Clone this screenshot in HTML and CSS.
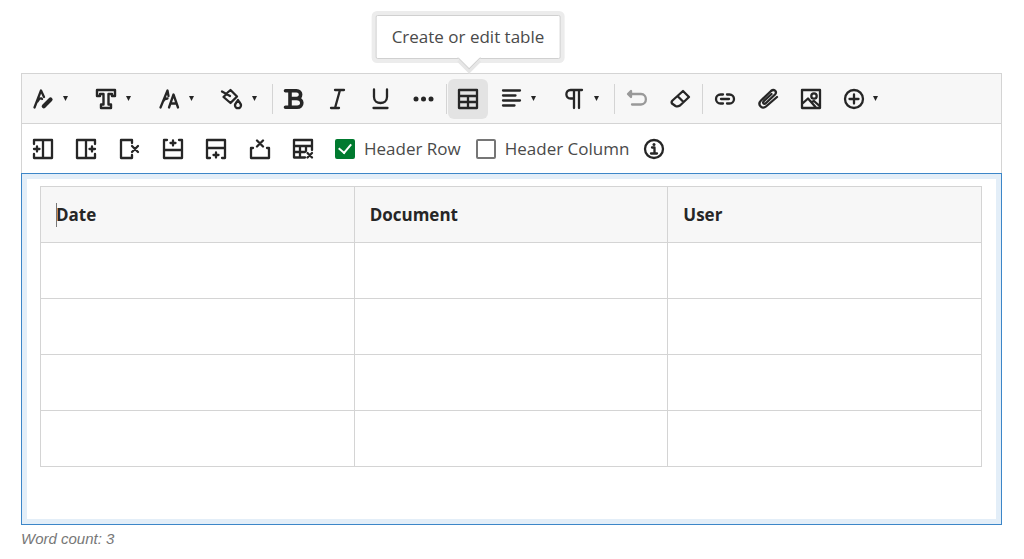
FILE: index.html
```html
<!DOCTYPE html>
<html lang="en">
    <head>
        <meta charset="UTF-8" />
        <meta name="viewport" content="width=device-width, initial-scale=1.0" />
        <title>Text editor</title>
        <link rel="stylesheet" href="styles.css">
    </head>
    <body>
        <main class="editor">
            <div class="toolbar" role="toolbar" aria-label="Formatting">
                <div class="group">
                    <button class="tool drop" aria-label="Text color">
                        <svg viewBox="0 0 20 20"><path d="M1.5 18.5L8 1.5L11 8M4.5 12.5C6 9.500 8.500 8.500 9 10" /><path d="M10.800 17.200L12.500 15.500M13 15L17.500 10.500" stroke-width="4.200" /></svg>
                    </button>
                    <button class="tool drop" aria-label="Font">
                        <svg viewBox="0 0 20 20"><path d="M1 1H19V7H16V5H12.500V15.500H15V19H5V15.500H7.500V5H4V7H1Z" stroke-width="2.400" /></svg>
                    </button>
                    <button class="tool drop" aria-label="Font size">
                        <svg viewBox="0 0 20 20"><path d="M1.500 18.500L8.500 1.500L9.500 7M4 12.500C5 10 7 9.500 8.500 9.500M10 18.500L14.500 5.500L19 18.500M11.500 14.500H17.500" /></svg>
                    </button>
                    <button class="tool drop" aria-label="Highlight color">
                        <svg viewBox="0 0 20 20"><path d="M0 2.500L8 7M4.500 4.500L8.500 1L15 7.500L8.500 14L1.500 8L4.500 5" /><path d="M16 11C14.500 13.500 13 14.800 13 16.200A3 3 0 0 0 19 16.200C19 14.800 17.500 13.500 16 11Z" /></svg>
                    </button>
                </div>
                <div class="group">
                    <button class="tool" aria-label="Bold">
                        <svg viewBox="0 0 20 20"><path d="M1.500 1.700H12.500C18 1.700 18 9.500 12.500 9.500H6M12.500 9.500C19.500 9.500 19.500 18.300 13 18.300H1.500M6 2V18" stroke-width="3.600" /></svg>
                    </button>
                    <button class="tool" aria-label="Italic">
                        <svg viewBox="0 0 20 20"><path d="M6 1H15M2 19H10M11 1L6 19" transform="translate(2)" /></svg>
                    </button>
                    <button class="tool" aria-label="Underline">
                        <svg viewBox="0 0 20 20"><path d="M4 .5V8C4 16 17 16 17 8V.5M3.500 19H17.500" /></svg>
                    </button>
                    <button class="tool" aria-label="More formatting">
                        <svg viewBox="0 0 20 20"><g fill="currentColor" stroke="none"><circle cx="3" cy="10" r="2.500" /><circle cx="10.500" cy="10" r="2.500" /><circle cx="18" cy="10" r="2.500" /></g></svg>
                    </button>
                </div>
                <div class="group">
                    <button class="tool active" aria-describedby="tip" aria-label="Table">
                        <svg viewBox="0 0 20 20"><path d="M1 1H19V19H1ZM1 7H19M1 13H19M10 7V19" /></svg>
                        <span class="tooltip" id="tip" role="tooltip">Create or edit table</span>
                    </button>
                    <button class="tool drop" aria-label="Alignment">
                        <svg viewBox="0 0 20 20"><path d="M2 1.500H19M2 6.500H14.500M2 11.500H19M2 16.500H13.500" /></svg>
                    </button>
                    <button class="tool drop" aria-label="Text direction">
                        <svg viewBox="0 0 20 20"><path d="M18 1H6.500C1 1 1 9.500 6.500 9.500H10M10 1V19M15 1V19" /></svg>
                    </button>
                </div>
                <div class="group">
                    <button class="tool" aria-label="Undo" disabled>
                        <svg viewBox="0 0 20 20"><path d="M4 5H15C21.500 5 21.500 15.500 15 15.500H6" /><path d="M2 5L5 2V8Z" fill="currentColor" /></svg>
                    </button>
                    <button class="tool" aria-label="Clear formatting">
                        <svg viewBox="0 0 20 20"><path d="M14 2L20 8L11 16.500Q8.500 18 6.500 17L3 14.500Q2 13 3.500 11.500ZM8.500 7L14.500 13" /></svg>
                    </button>
                </div>
                <div class="group">
                    <button class="tool" aria-label="Link">
                        <svg viewBox="0 0 20 20"><path d="M9 5.500H6.500A4.500 4.500 0 0 0 6.500 14.500H9M13 5.500H15.500A4.500 4.500 0 0 1 15.500 14.500H13M7 10H15" /></svg>
                    </button>
                    <button class="tool" aria-label="Attach file">
                        <svg viewBox="0 0 20 20"><path d="M14.500 5L7 12C5 14 7 16 9 14L18 5.500C20.500 2.500 17-.5 14 2L4 11.500C0 15.500 5 21 9 17.500L20 8" /></svg>
                    </button>
                    <button class="tool" aria-label="Image">
                        <svg viewBox="0 0 20 20"><path d="M2 1H20V19H2ZM2.500 14.500L8 9.500L15.500 18M11.500 13L14 12L19 16.500" /><circle cx="14" cy="7" r="2.700" /></svg>
                    </button>
                    <button class="tool drop" aria-label="Insert content">
                        <svg viewBox="0 0 20 20"><circle cx="11" cy="10" r="9" /><path d="M11 5.500V14.500M6.500 10H15.500" /></svg>
                    </button>
                </div>
            </div>
            <div class="toolbar table-bar" role="toolbar" aria-label="Table">
                <div class="table-tools">
                    <button class="tool" aria-label="Insert column left">
                        <svg viewBox="0 0 20 20"><path d="M1 5V1H19V19H1V15M10 1V19M1 10H6.500M4 7.500V12.500" /></svg>
                    </button>
                    <button class="tool" aria-label="Insert column right">
                        <svg viewBox="0 0 20 20"><path d="M19 5V1H1V19H19V15M10 1V19M13.500 10H19M16 7.500V12.500" /></svg>
                    </button>
                    <button class="tool" aria-label="Delete column">
                        <svg viewBox="0 0 20 20"><path d="M12 4V1H1V19H12V16M12 7L18 13M18 7L12 13" /></svg>
                    </button>
                    <button class="tool" aria-label="Insert row above">
                        <svg viewBox="0 0 20 20"><path d="M4 1H1V19H19V1H16M1 11H19M7.500 4H12.500M10 1.500V6.500" /></svg>
                    </button>
                    <button class="tool" aria-label="Insert row below">
                        <svg viewBox="0 0 20 20"><path d="M4 19H1V1H19V19H16M1 9H19M7.500 16H12.500M10 13.500V18.500" /></svg>
                    </button>
                    <button class="tool" aria-label="Delete row">
                        <svg viewBox="0 0 20 20"><path d="M3 9H1V19H19V9H17M7 1.500L13 7.500M13 1.500L7 7.500" /></svg>
                    </button>
                    <button class="tool" aria-label="Delete table">
                        <svg viewBox="0 0 20 20"><path d="M12 18.500H1V1H19V11M1 7H19M1 13H12M7 7V18.500M13 7V12M14.500 14L19 18.500M19 14L14.500 18.500" /></svg>
                    </button>
                </div>
                <label class="check"><input type="checkbox" checked />Header Row</label>
                <label class="check"><input type="checkbox" />Header Column</label>
                <button class="tool info" aria-label="Table help">
                    <svg viewBox="0 0 20 20"><circle cx="10" cy="10" r="9" /><path d="M8 8.500H10.500V14M7 14.500H13" /><circle cx="10" cy="5.500" r="1.500" fill="currentColor" stroke="none" /></svg>
                </button>
            </div>
            <div class="content">
                <table>
                    <thead>
                        <tr><th><span class="cursor"></span>Date</th><th>Document</th><th>User</th></tr>
                    </thead>
                    <tbody>
                        <tr><td></td><td></td><td></td></tr>
                        <tr><td></td><td></td><td></td></tr>
                        <tr><td></td><td></td><td></td></tr>
                        <tr><td></td><td></td><td></td></tr>
                    </tbody>
                </table>
            </div>
            <p class="word-count">Word count: 3</p>
        </main>
    </body>
</html>
```
FILE: styles.css
```css
* {
    margin: 0;
    padding: 0;
    box-sizing: border-box;
}

body {
    padding: 73px 22px 0 21px;
    background: #fff;
    color: #262626;
    font: 17px/24px "Open Sans", "Noto Sans", sans-serif;
}

.toolbar {
    display: flex;
    align-items: center;
    height: 50px;
    border: 1px solid #d4d4d4;
    border-bottom: 0;
    background: #f7f7f7;
}

.group {
    display: flex;
    align-items: center;
    height: 30px;
    padding-left: 1px;
}

.group + .group {
    border-left: 1px solid #d4d4d4;
}

.group .tool {
    margin-right: 3px;
}

.group .drop:last-child {
    margin-right: 0;
}

.tool {
    position: relative;
    display: flex;
    align-items: center;
    gap: 10px;
    width: 40px;
    height: 40px;
    padding-left: 10px;
    border: 0;
    border-radius: 6px;
    background: none;
    color: #262626;
    font: inherit;
}

.tool svg {
    flex: none;
    width: 20px;
    height: 20px;
    overflow: visible;
    fill: none;
    stroke: currentColor;
    stroke-width: 2.3;
    stroke-linecap: round;
    stroke-linejoin: round;
}

.tool:disabled {
    color: #999;
}

.tool.active {
    background: #e3e3e3;
}

.drop {
    width: 60px;
}

.drop::after {
    content: "";
    width: 5px;
    height: 5px;
    background: #262626;
    clip-path: polygon(0 0, 100% 0, 50% 100%);
}

.tooltip {
    position: absolute;
    bottom: 60px;
    left: 50%;
    transform: translateX(-50%);
    padding: 9px 15px;
    border: 1px solid #d0d0d0;
    border-radius: 2px;
    background: #fff;
    box-shadow: 0 0 0 4px #ececec;
    color: #4a4a4a;
    white-space: nowrap;
}

.tooltip::after {
    content: "";
    position: absolute;
    left: 50%;
    bottom: -8px;
    width: 16px;
    height: 16px;
    margin-left: -7px;
    border: solid #d0d0d0;
    border-width: 0 1px 1px 0;
    background: #fff;
    box-shadow: 3px 3px 0 #e6e6e6;
    transform: rotate(45deg);
    clip-path: polygon(100% 0, 130% 0, 130% 130%, 0 130%, 0 100%);
}

.table-bar {
    padding-left: 1px;
    background: #fff;
}

.table-tools {
    display: flex;
    justify-content: space-between;
    width: 300px;
    margin-right: 12px;
}

.check {
    display: flex;
    align-items: center;
    gap: 9px;
    margin-right: 15px;
    color: #4a4a4a;
}

.check input {
    appearance: none;
    display: grid;
    place-items: center;
    width: 20px;
    height: 20px;
    border: 2px solid #767676;
    border-radius: 2px;
    background: #fff;
}

.check input:checked {
    border-color: #007a2f;
    background: #007a2f;
}

.check input:checked::after {
    content: "";
    width: 6px;
    height: 10px;
    margin-bottom: 3px;
    border: solid #fff;
    border-width: 0 2px 2px 0;
    transform: rotate(40deg);
}

.info {
    margin-left: -10px;
}

.content {
    min-height: 352px;
    padding: 12px 19px 12px 18px;
    border: 1px solid #3c86c8;
    box-shadow: inset 0 0 0 5px #e3eef8;
}

table {
    width: 100%;
    border-collapse: collapse;
    table-layout: fixed;
}

th,
td {
    height: 56px;
    padding: 0 15px;
    border: 1px solid #d4d4d4;
    text-align: left;
}

th {
    background: #f7f7f7;
}

.cursor {
    position: absolute;
    width: 1px;
    height: 24px;
    background: #777;
}

.word-count {
    padding-top: 2px;
    color: #777;
    font: italic 15px/24px "Liberation Sans", Arial, sans-serif;
}
```
